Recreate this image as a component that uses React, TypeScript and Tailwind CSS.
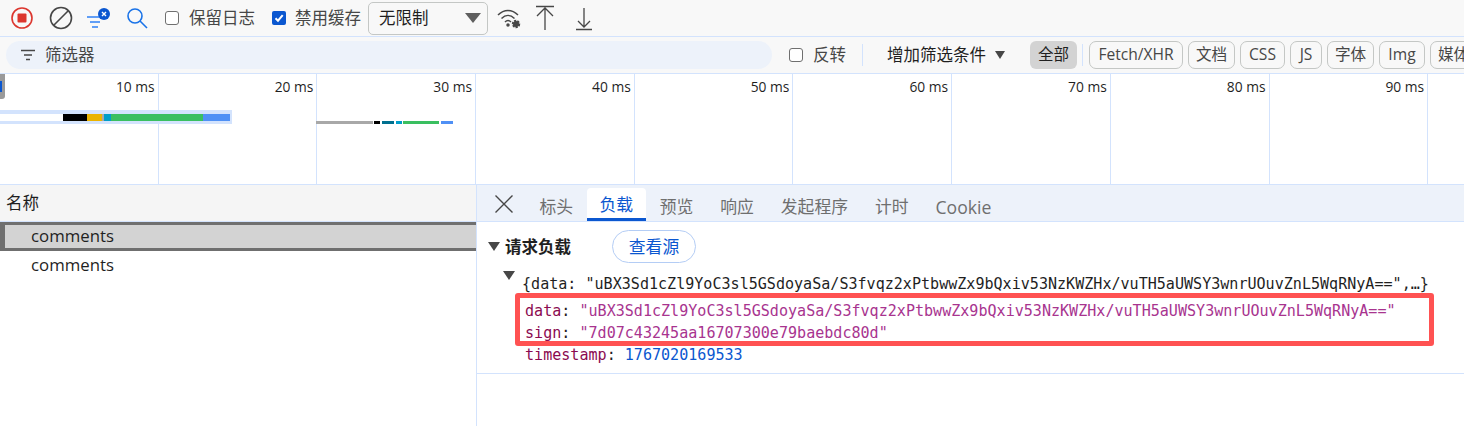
const sans = "font-['Open_Sans','Noto_Sans_CJK_SC',sans-serif]";

const marks = ['10 ms', '20 ms', '30 ms', '40 ms', '50 ms', '60 ms', '70 ms', '80 ms', '90 ms'];
const chips = [
  { label: 'Fetch/XHR', w: 'w-[94px]' },
  { label: '文档', w: 'w-[47px]' },
  { label: 'CSS', w: 'w-[45px]' },
  { label: 'JS', w: 'w-[32px]' },
  { label: '字体', w: 'w-[47px]' },
  { label: 'Img', w: 'w-[46px]' },
  { label: '媒体', w: 'w-[47px]' },
];
const tabs = ['标头', '负载', '预览', '响应', '发起程序', '计时', 'Cookie'];

function Checkbox({ checked = false }: { checked?: boolean }) {
  if (checked) {
    return (
      <span className="flex h-[14px] w-[14px] shrink-0 items-center justify-center rounded-[2px] bg-[#0b57d0]">
        <svg width="12" height="12" viewBox="0 0 12 12" fill="none" stroke="#fff" strokeWidth="2">
          <path d="M2.5 6.2 5 8.7 9.7 3.2" />
        </svg>
      </span>
    );
  }
  return <span className="block h-[14px] w-[14px] shrink-0 rounded-[3px] border-[1.5px] border-[#6f6f6f] bg-white" />;
}

function Toolbar() {
  return (
    <div className="flex h-[37px] items-center border-b border-[#d3e3fd] bg-[#f8f8f8] text-[16.5px] text-[#474747]">
      <svg className="ml-[10px]" width="24" height="24" viewBox="0 0 24 24" fill="none">
        <circle cx="12" cy="12" r="10" stroke="#dc362e" strokeWidth="1.6" />
        <rect x="7.5" y="7.5" width="9" height="9" rx="1" fill="#dc362e" />
      </svg>
      <svg className="ml-[15px]" width="24" height="24" viewBox="0 0 24 24" fill="none" stroke="#474747" strokeWidth="1.6">
        <circle cx="12" cy="12" r="10.5" />
        <path d="M19.5 4.5 4.5 19.5" />
      </svg>
      <svg className="ml-[13px]" width="26" height="24" viewBox="0 0 26 24" fill="none">
        <path d="M1 11h14M4 16h10M6 21h6" stroke="#2f80f5" strokeWidth="1.4" />
        <circle cx="18" cy="8" r="6" fill="#0b57d0" />
        <path d="M16 6l4 4M20 6l-4 4" stroke="#fff" strokeWidth="1.4" />
      </svg>
      <svg className="ml-[14px]" width="22" height="22" viewBox="0 0 22 22" fill="none" stroke="#1a73e8" strokeWidth="1.6">
        <circle cx="9" cy="9" r="7" />
        <path d="M14 14l7 7" />
      </svg>
      <span className="ml-[17px]"><Checkbox /></span>
      <span className="ml-[10px]">保留日志</span>
      <span className="ml-[17px]"><Checkbox checked /></span>
      <span className="ml-[9px]">禁用缓存</span>
      <div className="ml-[7px] flex h-[33px] w-[120px] items-center justify-between rounded-[5px] border border-[#c4c7c5] pl-[10px] pr-[5px] text-[#1f1f1f]">
        <span>无限制</span>
        <svg width="18" height="12" viewBox="0 0 18 12" fill="#5f5f5f"><path d="M1 1h16L9 11z" /></svg>
      </div>
      <svg className="ml-[8px]" width="26" height="24" viewBox="0 0 26 24" fill="none" stroke="#474747" strokeWidth="1.5">
        <path d="M2 9c6-6 14-6 20 0M5.5 12.5c4-4 9-4 13 0M9 16c2-2 4-2 6 0" />
        <circle cx="12" cy="19" r="1" fill="#474747" />
        <circle cx="20" cy="18" r="3" fill="#474747" strokeDasharray="2 1" strokeWidth="2.4" />
      </svg>
      <svg className="ml-[12px]" width="22" height="26" viewBox="0 0 22 26" fill="none" stroke="#474747" strokeWidth="1.3">
        <path d="M2 1.5h18M11 25V3M3 11l8-8 8 8" />
      </svg>
      <svg className="ml-[17px]" width="22" height="26" viewBox="0 0 22 26" fill="none" stroke="#474747" strokeWidth="1.3">
        <path d="M3 24.5h16M11 3v19M5 16l6 6 6-6" />
      </svg>
    </div>
  );
}

function FilterBar() {
  return (
    <div className="flex h-[37px] items-center overflow-hidden border-b border-[#d3e3fd] bg-[#f8f8f8] text-[#474747]">
      <div className="ml-[6px] flex h-[28px] w-[766px] shrink-0 items-center rounded-full bg-[#edf2fa] pl-[14px] text-[16.5px]">
        <svg width="16" height="12" viewBox="0 0 16 12" fill="none" stroke="#474747" strokeWidth="1.5">
          <path d="M1 1.5h14M4 6h8M6 10.5h4" />
        </svg>
        <span className="ml-[9px]">筛选器</span>
      </div>
      <span className="ml-[17px] shrink-0"><Checkbox /></span>
      <span className="ml-[10px] shrink-0 text-[16.5px]">反转</span>
      <span className="ml-[16px] h-[22px] w-px shrink-0 bg-[#d3e3fd]" />
      <span className="ml-[24px] shrink-0 text-[16.5px] text-[#1f1f1f]">增加筛选条件</span>
      <svg className="ml-[9px] shrink-0" width="10" height="8" viewBox="0 0 10 8" fill="#474747"><path d="M0 0h10L5 8z" /></svg>
      <span className="ml-[25px] flex h-[28px] w-[47px] shrink-0 items-center justify-center rounded-[6px] bg-[#d3d3d3] text-[15.5px] text-[#1f1f1f]">全部</span>
      <span className="ml-[5px] h-[22px] w-px shrink-0 bg-[#d3e3fd]" />
      <div className="ml-[6px] flex shrink-0 gap-[5px]">
        {chips.map((chip) => (
          <span
            key={chip.label}
            className={`flex h-[28px] ${chip.w} shrink-0 items-center justify-center rounded-[7px] border border-[#c4c7c5] text-[15.6px]`}
          >
            {chip.label}
          </span>
        ))}
      </div>
    </div>
  );
}

function Overview() {
  return (
    <div className="relative flex h-[111px] overflow-hidden border-b border-[#d3e3fd] bg-white text-[13.8px] text-[#1f1f1f]">
      {marks.map((mark) => (
        <div key={mark} className="h-full w-[158.7px] shrink-0 border-r border-[#d3e3fd] pr-[3px] pt-[3px] text-right">
          {mark}
        </div>
      ))}
      {/* left handle of the range selector */}
      <div className="absolute left-0 top-0 h-[25px] w-[5px] rounded-br-[3px] bg-[#9a9a9a]">
        <div className="mt-[7px] h-[11px] w-[2px] bg-[#0b57d0]" />
      </div>
      {/* selected request */}
      <div className="absolute left-0 top-[36px] flex h-[14px] w-[232px] items-center bg-[#d3e3fd] pr-[2px]">
        <div className="h-[7px] w-[63px] bg-white" />
        <div className="h-[7px] w-[24px] bg-black" />
        <div className="h-[7px] w-[15px] bg-[#ebb300]" />
        <div className="h-[7px] w-[2px] bg-[#a8a8a8]" />
        <div className="h-[7px] w-[7px] bg-[#009ec9]" />
        <div className="h-[7px] w-[92px] bg-[#3abf60]" />
        <div className="h-[7px] w-[27px] bg-[#4f90f5]" />
      </div>
      {/* second request */}
      <div className="absolute left-[316px] top-[47px] flex h-[3px] items-center">
        <div className="h-[3px] w-[57px] bg-[#a8a8a8]" />
        <div className="ml-[1px] h-[3px] w-[6px] bg-black" />
        <div className="ml-[2px] h-[3px] w-[12px] bg-[#00708f]" />
        <div className="ml-[2px] h-[3px] w-[6px] bg-[#009ec9]" />
        <div className="ml-[1px] h-[3px] w-[36px] bg-[#3abf60]" />
        <div className="ml-[2px] h-[3px] w-[12px] bg-[#4f90f5]" />
      </div>
    </div>
  );
}

function NamePane() {
  return (
    <div className="w-[476px] shrink-0 text-[16.8px] text-[#1f1f1f]">
      <div className="flex h-[37px] items-center border-b border-[#d3e3fd] bg-[#f5f5f5] pl-[6px] text-[16.5px]">名称</div>
      <div className="flex h-[29px] items-center border-y-[3px] border-l-[5px] border-[#6f6f6f] bg-[#d3d3d3] pb-[2px] pl-[26px]">
        comments
      </div>
      <div className="flex h-[29px] items-center pb-[2px] pl-[31px]">comments</div>
    </div>
  );
}

function Payload() {
  return (
    <div className="relative min-w-0 flex-1 border-l border-[#d3e3fd] bg-white">
      <div className="flex h-[37px] items-end border-b border-[#d3e3fd] bg-[#edf2fa] text-[16.8px] text-[#6f6f6f]">
        <svg className="mb-[7px] ml-[17px] mr-[12px]" width="20" height="20" viewBox="0 0 20 20" fill="none" stroke="#474747" strokeWidth="1.4">
          <path d="M1.5 1.5 18.5 18.5M18.5 1.5 1.5 18.5" />
        </svg>
        {tabs.map((tab) =>
          tab === '负载' ? (
            <span key={tab} className="flex h-[33px] items-center rounded-t-[4px] border-b-[3px] border-[#0b57d0] bg-white px-[13px] pt-[3px] text-[#0b57d0]">
              {tab}
            </span>
          ) : (
            <span key={tab} className={`flex h-[33px] items-center px-[13.5px] pt-[5px] ${tab === 'Cookie' ? 'text-[17.6px]' : ''}`}>{tab}</span>
          )
        )}
      </div>
      <div className="border-b border-[#d3e3fd] pb-[7px]">
        <div className="flex h-[49px] items-center pl-[11px]">
          <svg width="12" height="9" viewBox="0 0 12 9" fill="#474747"><path d="M0 0h12L6 9z" /></svg>
          <span className="ml-[5px] pt-[1px] text-[16.5px] font-bold text-[#1f1f1f]">请求负载</span>
          <span className="ml-[41px] flex h-[33px] w-[84px] items-center justify-center rounded-full border border-[#b4cdf5] text-[16.8px] text-[#0b57d0]">
            查看源
          </span>
        </div>
        <div className="mt-[1px] font-['DejaVu_Sans_Mono',monospace] text-[15.07px] leading-[22px]">
          <div className="relative flex h-[22px] items-center pl-[26px] pt-[2px] text-[#1f1f1f]">
            <svg className="absolute left-[26px] top-[-1px]" width="12" height="9" viewBox="0 0 12 9" fill="#474747"><path d="M0 0h12L6 9z" /></svg>
            <span className="ml-[19px] whitespace-nowrap">
              {'{data: "uBX3Sd1cZl9YoC3sl5GSdoyaSa/S3fvqz2xPtbwwZx9bQxiv53NzKWZHx/vuTH5aUWSY3wnrUOuvZnL5WqRNyA==",…}'}
            </span>
          </div>
          <div className="mt-[6px] whitespace-nowrap pl-[48px]">
            <span className="text-[#8b0a50]">data</span>
            <span className="text-[#1f1f1f]">: </span>
            <span className="text-[#a8348f]">"uBX3Sd1cZl9YoC3sl5GSdoyaSa/S3fvqz2xPtbwwZx9bQxiv53NzKWZHx/vuTH5aUWSY3wnrUOuvZnL5WqRNyA=="</span>
          </div>
          <div className="whitespace-nowrap pl-[48px]">
            <span className="text-[#8b0a50]">sign</span>
            <span className="text-[#1f1f1f]">: </span>
            <span className="text-[#a8348f]">"7d07c43245aa16707300e79baebdc80d"</span>
          </div>
          <div className="whitespace-nowrap pl-[48px]">
            <span className="text-[#8b0a50]">timestamp</span>
            <span className="text-[#1f1f1f]">: </span>
            <span className="text-[#0b57d0]">1767020169533</span>
          </div>
        </div>
      </div>
      {/* red annotation drawn over the screenshot */}
      <div className="absolute left-[38px] top-[108px] h-[53px] w-[919px] rounded-[3px] border-[5px] border-[#ff5252]" />
    </div>
  );
}

export default function App() {
  return (
    <div className={`h-[426px] w-[1464px] overflow-hidden bg-white ${sans}`}>
      <Toolbar />
      <FilterBar />
      <Overview />
      <div className="flex h-[241px]">
        <NamePane />
        <Payload />
      </div>
    </div>
  );
}
